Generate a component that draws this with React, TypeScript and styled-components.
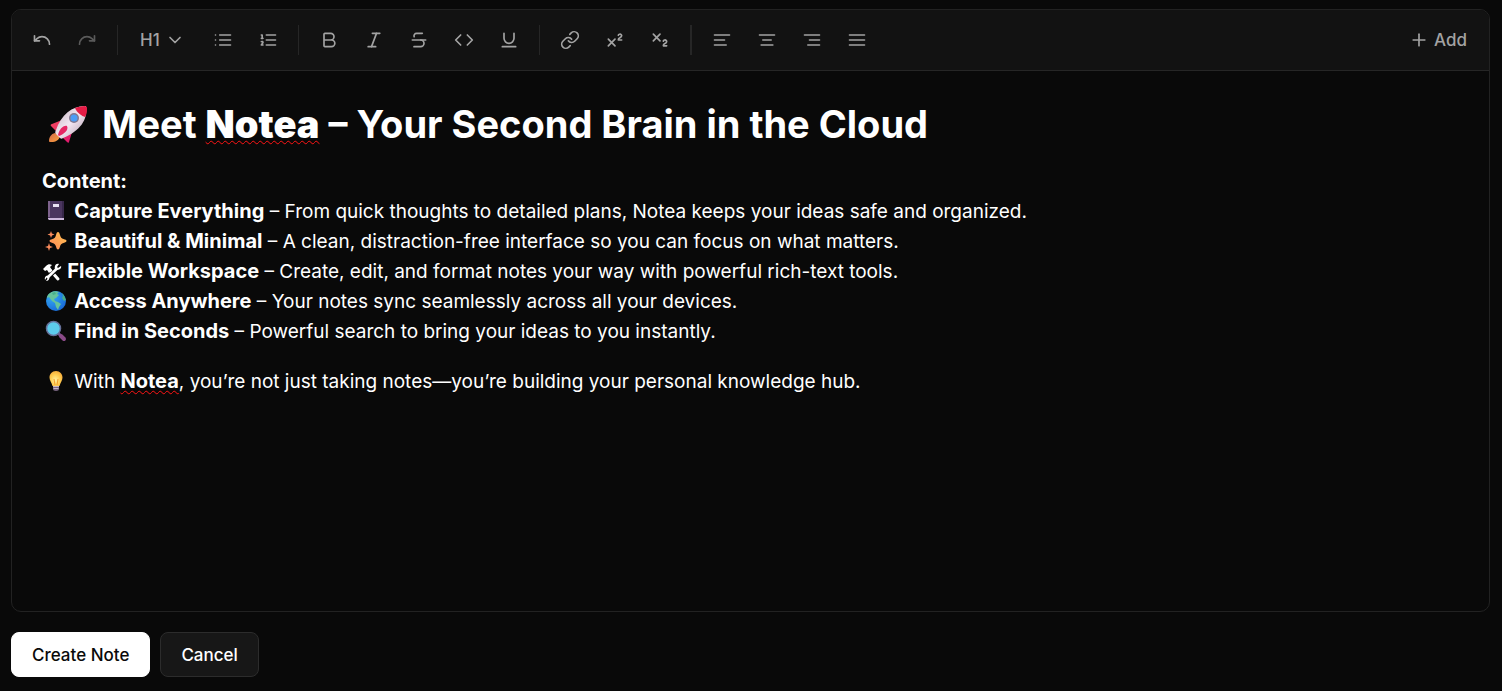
import React from "react";
import styled, { createGlobalStyle, css } from "styled-components";
import {
  Bold,
  ChevronDown,
  Code,
  Italic,
  Link,
  Plus,
  Redo,
  Strikethrough,
  Subscript,
  Superscript,
  Underline,
  Undo,
} from "lucide-react";

const GlobalStyle = createGlobalStyle`
  *, *::before, *::after { box-sizing: border-box; }
  body {
    margin: 0;
    background: #090909;
    color: #ffffff;
    font-family: Inter, "Liberation Sans", sans-serif;
  }
  button { font-family: inherit; cursor: pointer; }
`;

const Page = styled.main`
  display: flex;
  flex-direction: column;
  gap: 20px;
  min-height: 100vh;
  padding: 9px 12px 14px 11px;
`;

const Panel = styled.section`
  flex: 1;
  display: flex;
  flex-direction: column;
  border: 1px solid #222222;
  border-radius: 10px;
  overflow: hidden;
`;

const Toolbar = styled.div`
  display: flex;
  flex-wrap: wrap;
  align-items: center;
  gap: 10px;
  padding: 10px;
  background: #121212;
  border-bottom: 1px solid #262626;
`;

const Group = styled.div`
  display: flex;
  align-items: center;
  gap: 5px;
`;

const Separator = styled.span<{ $thick?: boolean }>`
  width: ${(p) => (p.$thick ? 2 : 1)}px;
  height: 30px;
  background: #262626;
`;

const toolBase = css`
  display: inline-flex;
  align-items: center;
  justify-content: center;
  height: 40px;
  border: 0;
  border-radius: 8px;
  background: transparent;
  color: #a3a3a3;
  &:hover:enabled { background: #1f1f1f; }
  &:disabled { color: #5a5a5a; cursor: default; }
`;

const ToolButton = styled.button`
  ${toolBase}
  width: 40px;
  padding: 0;
`;

const TextTool = styled.button<{ $pad: string }>`
  ${toolBase}
  gap: 5px;
  padding: ${(p) => p.$pad};
  font-size: 17px;
  font-weight: 500;
`;

const Spacer = styled.span`
  flex: 1;
`;

const Editor = styled.div`
  flex: 1;
  padding: 30px;
  font-size: 19px;
  line-height: 30px;
  outline: none;
`;

const Title = styled.h1`
  margin: 0 0 20px;
  font-size: 38px;
  line-height: 46px;
  font-weight: 700;
  strong { font-weight: 900; }
`;

const Paragraph = styled.p`
  margin: 0 0 20px;
  strong { font-size: 20px; line-height: 20px; }
`;

const Misspelled = styled.strong`
  text-decoration: underline wavy #ff1414 1px;
  text-underline-offset: 2px;
  text-decoration-skip-ink: none;
`;

const EmojiSvg = styled.svg<{ $large?: boolean }>`
  width: ${(p) => (p.$large ? 40 : 22)}px;
  height: ${(p) => (p.$large ? 40 : 22)}px;
  margin: ${(p) => (p.$large ? "0 5px 0 6px" : "0 2px 0 3px")};
  vertical-align: ${(p) => (p.$large ? "-7px" : "-4px")};
`;

const ToolsSvg = styled.svg`
  width: 20px;
  height: 20px;
  vertical-align: -4px;
`;

const Actions = styled.div`
  display: flex;
  gap: 10px;
`;

const ActionButton = styled.button<{ $primary?: boolean }>`
  height: 45px;
  padding: 0 20px;
  border: 1px solid ${(p) => (p.$primary ? "#ffffff" : "#2c2c2c")};
  border-radius: 8px;
  background: ${(p) => (p.$primary ? "#ffffff" : "#171717")};
  color: ${(p) => (p.$primary ? "#0a0a0a" : "#ffffff")};
  font-size: 17px;
  font-weight: 500;
`;

function LineIcon({ d }: { d: string }) {
  return (
    <svg width="20" height="20" viewBox="0 0 24 24" fill="none" stroke="currentColor" strokeWidth="2" strokeLinecap="round" strokeLinejoin="round" aria-hidden="true">
      <path d={d} />
    </svg>
  );
}

const LIST = "M3 6h.01M3 12h.01M3 18h.01M8 6h13M8 12h13M8 18h13";
const ORDERED = "M10 6h11M10 12h11M10 18h11M4 6h1v4M4 10h2M6 18H4c0-1 2-2 2-3s-1-1.5-2-1";

const alignments = [
  { label: "Align left", d: "M3 6h18M3 12h12M3 18h14" },
  { label: "Align center", d: "M3 6h18M7 12h10M5 18h14" },
  { label: "Align right", d: "M3 6h18M9 12h12M7 18h14" },
  { label: "Justify", d: "M3 6h18M3 12h18M3 18h18" },
];

const marks = [
  { label: "Bold", Icon: Bold },
  { label: "Italic", Icon: Italic },
  { label: "Strikethrough", Icon: Strikethrough },
  { label: "Code", Icon: Code },
  { label: "Underline", Icon: Underline },
];

const inserts = [
  { label: "Link", Icon: Link },
  { label: "Superscript", Icon: Superscript },
  { label: "Subscript", Icon: Subscript },
];

function Rocket() {
  return (
    <EmojiSvg $large viewBox="0 0 40 40" role="img" aria-label="Rocket">
      <defs>
        <linearGradient id="hull" x1="0" y1="0" x2="1" y2="1">
          <stop offset="0.2" stopColor="#d3c5d0" />
          <stop offset="0.5" stopColor="#f3e6f2" />
          <stop offset="0.9" stopColor="#bda9b8" />
        </linearGradient>
        <linearGradient id="fin" x1="0" y1="0" x2="1" y2="1">
          <stop offset="0" stopColor="#f4485f" />
          <stop offset="1" stopColor="#df126f" />
        </linearGradient>
        <linearGradient id="flame" x1="0" y1="0" x2="1" y2="1">
          <stop offset="0" stopColor="#cf6a4a" />
          <stop offset="1" stopColor="#ffa23c" />
        </linearGradient>
      </defs>
      <path d="M7 28C3 29 1 32 1 36c0 1 1 1 2 1 5 0 8-2 9-6z" fill="url(#flame)" />
      <path d="M14 15 4 19c-1 0-2 1-1 2l7 7zM25 24l-4 13c0 1-1 1-2 0l-8-8z" fill="url(#fin)" />
      <path d="M38 1C26 0 13 9 8 25c-1 2-1 3 0 4l4 4c1 1 2 1 3 0C32 26 40 15 38 1z" fill="url(#hull)" />
      <path d="M27 3c3-1 6-2 10-2 1 0 2 1 2 2 0 3 0 6-2 9-3-1-8-4-10-9z" fill="#e51c46" />
      <path d="M10 30c1-5 5-10 9-9 2 4-3 8-8 10z" fill="#e62765" />
      <circle cx="26" cy="13" r="5" fill="#82788f" />
      <circle cx="26" cy="13" r="3.5" fill="#4b9cf5" />
    </EmojiSvg>
  );
}

function Notebook() {
  return (
    <EmojiSvg viewBox="0 0 22 22" role="img" aria-label="Notebook">
      <path d="M3 1h15v18H4a1 1 0 0 1-1-1z" fill="#4b365f" />
      <path d="M3 1h2v16H3z" fill="#7d628c" />
      <path d="M17 1h2v17h-2z" fill="#38284a" />
      <path d="M3 18h16v2H4l-1-1z" fill="#cdb8dc" />
      <rect x="8" y="4" width="6" height="3" fill="#e9e1f2" />
    </EmojiSvg>
  );
}

function Sparkles() {
  return (
    <EmojiSvg viewBox="0 0 22 22" role="img" aria-label="Sparkles">
      <defs>
        <linearGradient id="spark" x1="0" y1="1" x2="1" y2="0">
          <stop offset="0" stopColor="#ff8759" />
          <stop offset="1" stopColor="#ffc34f" />
        </linearGradient>
      </defs>
      <path d="M13 2c1 0 1.500 1 2 3 .6 2.500 1.500 3.500 3.500 4 2 .6 3 1 3 1.900s-1 1.400-3 2c-2 .6-3 1.500-3.500 3.500-.5 2-1 3-2 3s-1.500-1-2-3c-.6-2-1.500-3-3.500-3.500-2-.6-3-1.100-3-2s1-1.300 3-1.900c2-.5 3-1.500 3.500-4C11.500 3 12 2 13 2z" fill="url(#spark)" />
      <path d="m6 1 .9 2.600L9.500 4.500 7 5.400 6 8l-.9-2.600L2.500 4.500l2.600-.9zM4 13l1 3 3 1-3 1-1 3-1-3-3-1 3-1z" fill="#f98b5c" />
    </EmojiSvg>
  );
}

function HammerAndWrench() {
  return (
    <ToolsSvg viewBox="0 0 20 20" role="img" aria-label="Hammer and wrench">
      <path d="M8.500 8.500 16 17" stroke="#fff" strokeWidth="3" strokeLinecap="round" />
      <path d="m1 7 3-3c2-2 4-2 6-1L8 5l2 3-3 3-2-3-2 1z" fill="#fff" />
      <path d="M17.500 4.500 5 16.500" stroke="#090909" strokeWidth="4" />
      <path d="M15 6.500 5 16" stroke="#fff" strokeWidth="2.600" />
      <path d="M17 2c-3-1-5 2-4 5l2 1c2 0 5-1 4-4l-3 2-1-1zM3 18c-1-3 1-5 4-4 1 2 0 5-3 5l2-3-1-1z" fill="#fff" />
    </ToolsSvg>
  );
}

function Globe() {
  return (
    <EmojiSvg viewBox="0 0 22 22" role="img" aria-label="Globe">
      <defs>
        <radialGradient id="sea" cx="0.3" cy="0.3" r="0.8">
          <stop offset="0" stopColor="#35a9f4" />
          <stop offset="1" stopColor="#1768d6" />
        </radialGradient>
      </defs>
      <circle cx="11" cy="11" r="10" fill="url(#sea)" />
      <path d="M5 3c3-2 6-2 9-1l-2 2 2 1-3 3-2 1 1 2 3 1 3 2-2 3-1 3-2-3-1-4-3-2-3-4-2 1c0-2 1-4 3-5z" fill="#65c49b" />
      <path d="M17 3c2 2 3 4 4 7l-2 1-2-3 1-2zM7 3l3-1 1 2-3 1z" fill="#47ae8b" />
    </EmojiSvg>
  );
}

function Magnifier() {
  return (
    <EmojiSvg viewBox="0 0 22 22" role="img" aria-label="Magnifying glass">
      <path d="m13 13 6 6" stroke="#73558d" strokeWidth="3" />
      <path d="m16 16 3 3" stroke="#8a4a87" strokeWidth="4" strokeLinecap="round" />
      <circle cx="8.500" cy="8.500" r="7" fill="#5ccbec" stroke="#66709a" strokeWidth="1.500" />
    </EmojiSvg>
  );
}

function Bulb() {
  return (
    <EmojiSvg viewBox="0 0 22 22" role="img" aria-label="Light bulb">
      <defs>
        <radialGradient id="glow" cx="0.45" cy="0.6" r="0.7">
          <stop offset="0" stopColor="#fff0a0" />
          <stop offset="0.5" stopColor="#ffce52" />
          <stop offset="1" stopColor="#f3a132" />
        </radialGradient>
      </defs>
      <path d="M8 15h6v4c0 1-1 2-3 2s-3-1-3-2z" fill="#77647f" />
      <path d="M8 16.500h6M8.500 18.500h5" stroke="#c5b5c9" strokeWidth="1" />
      <path d="M11 1c4 0 6.500 3 6.500 6.500 0 3-2 5-3 8.500h-7c-1-3.500-3-5.500-3-8.500C4.500 4 7 1 11 1z" fill="url(#glow)" />
      <path d="M9 9l1 6m3-6-1 6" stroke="#f59d2c" strokeWidth="1" />
    </EmojiSvg>
  );
}

const features = [
  { Emoji: Notebook, name: "Capture Everything", text: "From quick thoughts to detailed plans, Notea keeps your ideas safe and organized." },
  { Emoji: Sparkles, name: "Beautiful & Minimal", text: "A clean, distraction-free interface so you can focus on what matters." },
  { Emoji: HammerAndWrench, name: "Flexible Workspace", text: "Create, edit, and format notes your way with powerful rich-text tools." },
  { Emoji: Globe, name: "Access Anywhere", text: "Your notes sync seamlessly across all your devices." },
  { Emoji: Magnifier, name: "Find in Seconds", text: "Powerful search to bring your ideas to you instantly." },
];

export default function App() {
  return (
    <>
      <GlobalStyle />
      <Page>
        <Panel>
          <Toolbar role="toolbar" aria-label="Formatting">
            <Group>
              <ToolButton aria-label="Undo"><Undo size={20} /></ToolButton>
              <ToolButton aria-label="Redo" disabled><Redo size={20} /></ToolButton>
            </Group>
            <Separator />
            <TextTool $pad="0 8px 0 12px" aria-label="H1, heading level" aria-haspopup="menu">
              H1
              <ChevronDown size={20} />
            </TextTool>
            <Group>
              <ToolButton aria-label="Bullet list"><LineIcon d={LIST} /></ToolButton>
              <ToolButton aria-label="Numbered list"><LineIcon d={ORDERED} /></ToolButton>
            </Group>
            <Separator />
            <Group>
              {marks.map(({ label, Icon }) => (
                <ToolButton key={label} aria-label={label}><Icon size={20} /></ToolButton>
              ))}
            </Group>
            <Separator />
            <Group>
              {inserts.map(({ label, Icon }) => (
                <ToolButton key={label} aria-label={label}><Icon size={20} /></ToolButton>
              ))}
            </Group>
            <Separator $thick />
            <Group>
              {alignments.map(({ label, d }) => (
                <ToolButton key={label} aria-label={label}><LineIcon d={d} /></ToolButton>
              ))}
            </Group>
            <Spacer />
            <TextTool $pad="0 12px">
              <Plus size={20} />
              Add
            </TextTool>
          </Toolbar>
          <Editor contentEditable suppressContentEditableWarning spellCheck={false} role="textbox" aria-multiline="true" aria-label="Note">
            <Title>
              <Rocket /> Meet <Misspelled>Notea</Misspelled> – Your Second Brain in the Cloud
            </Title>
            <Paragraph>
              <strong>Content:</strong>
              {features.map(({ Emoji, name, text }) => (
                <React.Fragment key={name}>
                  <br />
                  <Emoji /> <strong>{name}</strong> – {text}
                </React.Fragment>
              ))}
            </Paragraph>
            <Paragraph>
              <Bulb /> With <Misspelled>Notea</Misspelled>, you’re not just taking notes—you’re building your personal knowledge hub.
            </Paragraph>
          </Editor>
        </Panel>
        <Actions>
          <ActionButton $primary>Create Note</ActionButton>
          <ActionButton>Cancel</ActionButton>
        </Actions>
      </Page>
    </>
  );
}
